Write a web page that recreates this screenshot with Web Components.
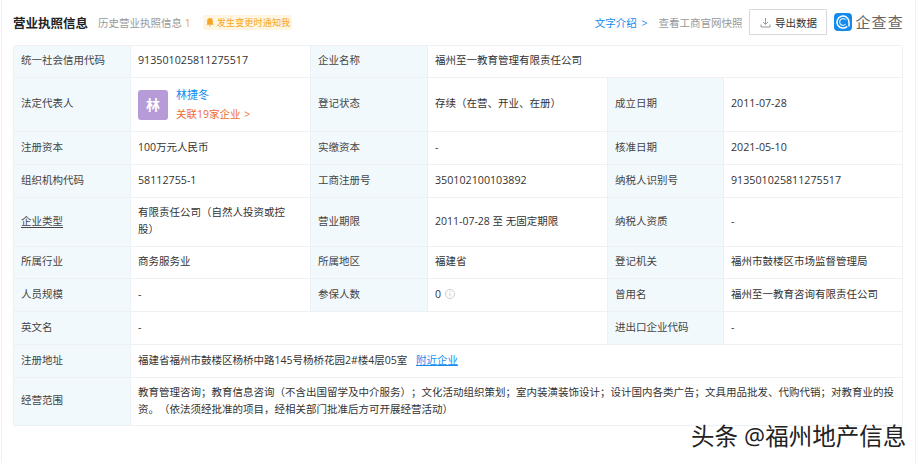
<!DOCTYPE html>
<html lang="zh">
<head>
<meta charset="utf-8">
<title>营业执照信息</title>
<style>
  html, body { margin: 0; background: #fff; }
  body {
    width: 920px;
    height: 463px;
    overflow: hidden;
    font-family: "Open Sans", "Noto Sans CJK SC", sans-serif;
    text-spacing-trim: space-all;
  }
</style>
</head>
<body>
<license-page></license-page>

<script>
class LicenseHeader extends HTMLElement {
    constructor() {
        super();
        this.attachShadow({ mode: 'open' });
        this.shadowRoot.innerHTML = `
            <style>
                :host {
                    display: flex;
                    align-items: center;
                    height: 45px;
                    font-size: 10.5px;
                    color: #999;
                }
                h2 { margin: -1px 0 0; font-size: 12.5px; font-weight: 700; color: #222; }
                .history { margin-left: 10px; }
                .history b { font-weight: 400; color: #f5a623; }
                .notify {
                    margin-left: 12px;
                    padding: 0 2px 0 3px;
                    height: 15px;
                    line-height: 15px;
                    background: #fff5e3;
                    border-radius: 2px;
                    color: #f5a623;
                    font-size: 9.2px;
                    display: flex;
                    align-items: center;
                    gap: 3px;
                }
                .right { margin-left: auto; display: flex; align-items: center; margin-top: -1px; }
                .link { color: #128bed; word-spacing: 2px; }
                .snap { margin-left: 11px; }
                .export {
                    margin-left: 7px;
                    width: 78px;
                    height: 26px;
                    border: 1px solid #d8d8d8;
                    border-radius: 1px;
                    box-sizing: border-box;
                    color: #333;
                    display: flex;
                    align-items: center;
                    justify-content: center;
                    gap: 4px;
                }
                .logo { margin-left: 7px; display: flex; align-items: center; gap: 3px; margin-right: 16px; }
                .logo span { font-size: 15px; color: #666; letter-spacing: 1.2px; line-height: 18px; }
            </style>
            <h2>营业执照信息</h2>
            <span class="history">历史营业执照信息 <b>1</b></span>
            <span class="notify">
                <svg width="8" height="9" viewBox="0 0 8 9"><path d="M4 0C2.200 0 1.200 1.300 1.200 3v2.400L.3 6.800h7.400l-.9-1.400V3C6.800 1.300 5.800 0 4 0zM3 7.400h2L4 9z" fill="#f5a623"/></svg>
                发生变更时通知我
            </span>
            <div class="right">
                <span class="link">文字介绍 &gt;</span>
                <span class="snap">查看工商官网快照</span>
                <span class="export">
                    <svg width="11" height="11" viewBox="0 0 11 11" fill="none" stroke="#999" stroke-width="1"><path d="M5.500 1v6M3 5l2.500 2.500L8 5M1 7.500V10h9V7.500"/></svg>
                    导出数据
                </span>
                <span class="logo">
                    <svg width="18" height="18" viewBox="0 0 18 18">
                        <rect width="18" height="18" rx="4" fill="#128bed"/>
                        <path d="M13.200 13.400A6 6 0 1 1 15 9v4.500" fill="none" stroke="#fff" stroke-width="1.500"/>
                        <path d="M11.600 7A3.300 3.300 0 1 0 11.600 11" fill="none" stroke="#cfe8fb" stroke-width="1.200"/>
                    </svg>
                    <span>企查查</span>
                </span>
            </div>
        `;
    }
}

class InfoTable extends HTMLElement {
    constructor() {
        super();
        this.attachShadow({ mode: 'open' });
        this.shadowRoot.innerHTML = `
            <style>
                :host {
                    display: grid;
                    grid-template-columns: 117px 180px 117px 180px 116px 179px;
                    grid-template-rows: 32px 54px 33px 33px 49px 32px 33px 33px 33px 48px;
                    width: 890px;
                    box-sizing: border-box;
                    border-top: 1px solid #edf1f4;
                    border-left: 1px solid #edf1f4;
                    border-radius: 2px;
                }
            </style>
            <slot></slot>
        `;
    }
}

class InfoCell extends HTMLElement {
    constructor() {
        super();
        this.attachShadow({ mode: 'open' });
        this.shadowRoot.innerHTML = `
            <style>
                :host {
                    display: flex;
                    align-items: center;
                    box-sizing: border-box;
                    padding: 0 7px 2px;
                    border-right: 1px solid #edf1f4;
                    border-bottom: 1px solid #edf1f4;
                    font-size: 10.5px;
                    line-height: 17px;
                    color: #333;
                    min-width: 0;
                }
                :host([label]) { background: #f2f9fc; color: #444; }
                :host([num]) { font-size: 10.7px; }
                :host([narrow]) { padding-right: 13px; }
                :host([flush]) { padding-right: 6px; }
            </style>
            <div><slot></slot></div>
        `;
    }
}

class PersonCard extends HTMLElement {
    constructor() {
        super();
        this.attachShadow({ mode: 'open' });
        this.shadowRoot.innerHTML = `
            <style>
                :host { display: flex; align-items: center; gap: 8px; margin-top: 2px; }
                .avatar {
                    width: 30px;
                    height: 30px;
                    border-radius: 3px;
                    background: #b79bd9;
                    color: #fff;
                    font-size: 14px;
                    font-weight: 700;
                    display: flex;
                    align-items: center;
                    justify-content: center;
                }
                .name { color: #128bed; font-size: 11px; }
                .rel { color: #ee6c33; margin-top: 3px; word-spacing: 1px; }
            </style>
            <div class="avatar">林</div>
            <div>
                <div class="name">林捷冬</div>
                <div class="rel">关联19家企业 &gt;</div>
            </div>
        `;
    }
}

class LicensePage extends HTMLElement {
    constructor() {
        super();
        this.attachShadow({ mode: 'open' });
        this.shadowRoot.innerHTML = `
            <style>
                :host {
                    display: block;
                    position: relative;
                    box-sizing: border-box;
                    width: 920px;
                    height: 463px;
                    padding: 0 0 0 13px;
                }
                .rail { position: absolute; top: 0; bottom: 0; width: 1px; background: #f0f0f0; }
                .rail.r { right: 4px; }
                .rail.l { left: 1px; }
                a { color: #128bed; text-decoration: underline; margin-left: 6px; }
                u { text-underline-offset: 2px; }
                .mark {
                    position: absolute;
                    left: 691px;
                    top: 420px;
                    font-size: 23.500px;
                    line-height: 32px;
                    color: #222;
                    text-shadow: 1px 1px 0 #fff, -1px 0 0 #fff, 0 -1px 0 #fff;
                    white-space: nowrap;
                }
                svg { vertical-align: -1px; margin-left: 1px; }
            </style>
            <license-header></license-header>
            <info-table>
                <info-cell label>统一社会信用代码</info-cell>
                <info-cell num>913501025811275517</info-cell>
                <info-cell label>企业名称</info-cell>
                <info-cell style="grid-column: span 3">福州至一教育管理有限责任公司</info-cell>

                <info-cell label>法定代表人</info-cell>
                <info-cell><person-card></person-card></info-cell>
                <info-cell label>登记状态</info-cell>
                <info-cell>存续（在营、开业、在册）</info-cell>
                <info-cell label>成立日期</info-cell>
                <info-cell num>2011-07-28</info-cell>

                <info-cell label>注册资本</info-cell>
                <info-cell>100万元人民币</info-cell>
                <info-cell label>实缴资本</info-cell>
                <info-cell>-</info-cell>
                <info-cell label>核准日期</info-cell>
                <info-cell num>2021-05-10</info-cell>

                <info-cell label>组织机构代码</info-cell>
                <info-cell num>58112755-1</info-cell>
                <info-cell label>工商注册号</info-cell>
                <info-cell num>350102100103892</info-cell>
                <info-cell label>纳税人识别号</info-cell>
                <info-cell num>913501025811275517</info-cell>

                <info-cell label><u>企业类型</u></info-cell>
                <info-cell narrow>有限责任公司（自然人投资或控股）</info-cell>
                <info-cell label>营业期限</info-cell>
                <info-cell>2011-07-28 至 无固定期限</info-cell>
                <info-cell label>纳税人资质</info-cell>
                <info-cell>-</info-cell>

                <info-cell label>所属行业</info-cell>
                <info-cell>商务服务业</info-cell>
                <info-cell label>所属地区</info-cell>
                <info-cell>福建省</info-cell>
                <info-cell label>登记机关</info-cell>
                <info-cell>福州市鼓楼区市场监督管理局</info-cell>

                <info-cell label>人员规模</info-cell>
                <info-cell>-</info-cell>
                <info-cell label>参保人数</info-cell>
                <info-cell>0 <svg width="10" height="10" viewBox="0 0 10 10" fill="none" stroke="#ccc"><circle cx="5" cy="5" r="4.500"/><path d="M5 4v3.500M5 2.200v1"/></svg></info-cell>
                <info-cell label>曾用名</info-cell>
                <info-cell>福州至一教育咨询有限责任公司</info-cell>

                <info-cell label>英文名</info-cell>
                <info-cell style="grid-column: span 3">-</info-cell>
                <info-cell label>进出口企业代码</info-cell>
                <info-cell>-</info-cell>

                <info-cell label>注册地址</info-cell>
                <info-cell style="grid-column: span 5">福建省福州市鼓楼区杨桥中路145号杨桥花园2#楼4层05室 <a>附近企业</a></info-cell>

                <info-cell label>经营范围</info-cell>
                <info-cell flush style="grid-column: span 5">教育管理咨询；教育信息咨询（不含出国留学及中介服务）；文化活动组织策划；室内装潢装饰设计；设计国内各类广告；文具用品批发、代购代销；对教育业的投资。（依法须经批准的项目，经相关部门批准后方可开展经营活动）</info-cell>
            </info-table>
            <div class="rail l"></div>
            <div class="rail r"></div>
            <div class="mark">头条 @福州地产信息</div>
        `;
    }
}

customElements.define('license-header', LicenseHeader);
customElements.define('info-table', InfoTable);
customElements.define('info-cell', InfoCell);
customElements.define('person-card', PersonCard);
customElements.define('license-page', LicensePage);
</script>
</body>
</html>
